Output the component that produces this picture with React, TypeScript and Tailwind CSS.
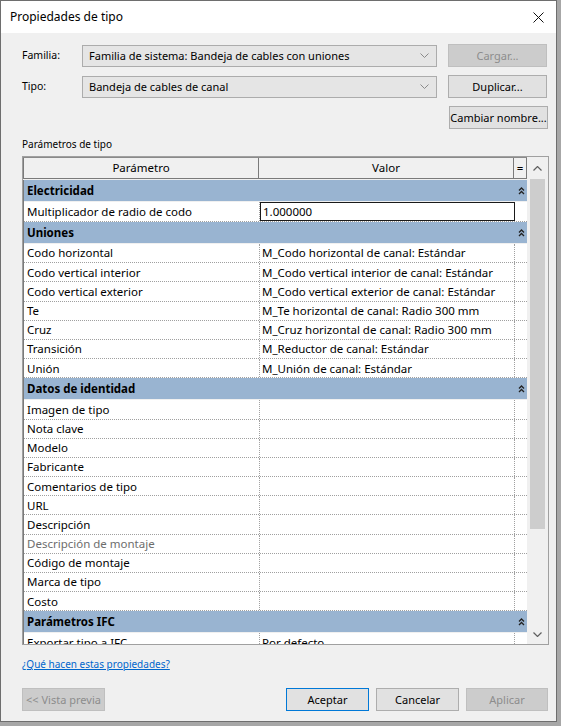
import React from "react";

type Row =
  | { kind: "section"; label: string }
  | { kind: "data"; label: string; value?: string; muted?: boolean; editing?: boolean };

const rows: Row[] = [
  { kind: "section", label: "Electricidad" },
  { kind: "data", label: "Multiplicador de radio de codo", value: "1.000000", editing: true },
  { kind: "section", label: "Uniones" },
  { kind: "data", label: "Codo horizontal", value: "M_Codo horizontal de canal: Estándar" },
  { kind: "data", label: "Codo vertical interior", value: "M_Codo vertical interior de canal: Estándar" },
  { kind: "data", label: "Codo vertical exterior", value: "M_Codo vertical exterior de canal: Estándar" },
  { kind: "data", label: "Te", value: "M_Te horizontal de canal: Radio 300 mm" },
  { kind: "data", label: "Cruz", value: "M_Cruz horizontal de canal: Radio 300 mm" },
  { kind: "data", label: "Transición", value: "M_Reductor de canal: Estándar" },
  { kind: "data", label: "Unión", value: "M_Unión de canal: Estándar" },
  { kind: "section", label: "Datos de identidad" },
  { kind: "data", label: "Imagen de tipo" },
  { kind: "data", label: "Nota clave" },
  { kind: "data", label: "Modelo" },
  { kind: "data", label: "Fabricante" },
  { kind: "data", label: "Comentarios de tipo" },
  { kind: "data", label: "URL" },
  { kind: "data", label: "Descripción" },
  { kind: "data", label: "Descripción de montaje", muted: true },
  { kind: "data", label: "Código de montaje" },
  { kind: "data", label: "Marca de tipo" },
  { kind: "data", label: "Costo" },
  { kind: "section", label: "Parámetros IFC" },
  { kind: "data", label: "Exportar tipo a IFC", value: "Por defecto" },
];

function DropArrow() {
  return (
    <svg width="9" height="5" viewBox="0 0 9 5" className="shrink-0">
      <path d="M0.5 0.5 L4.5 4.5 L8.5 0.5" fill="none" stroke="#8a8a8a" strokeWidth="1" />
    </svg>
  );
}

function Collapse() {
  return (
    <svg width="7" height="8" viewBox="0 0 7 8">
      <path d="M1 3.5 L3.5 1 L6 3.5" fill="none" stroke="#222" strokeWidth="1.3" />
      <path d="M1 7 L3.5 4.5 L6 7" fill="none" stroke="#222" strokeWidth="1.3" />
    </svg>
  );
}

function Combo({ text }: { text: string }) {
  return (
    <div className="w-[355px] h-[22px] border border-[#acacac] bg-[#e5e5e5] flex items-center justify-between pl-[6px] pr-[7px]">
      <span className="leading-none text-[11px] whitespace-nowrap">{text}</span>
      <DropArrow />
    </div>
  );
}

function Btn({
  children,
  disabled,
  primary,
  className,
}: {
  children: React.ReactNode;
  disabled?: boolean;
  primary?: boolean;
  className?: string;
}) {
  const base = "h-[23px] shrink-0 flex items-center justify-center leading-none border text-[11px] whitespace-nowrap ";
  const look = disabled
    ? "bg-[#cccccc] border-[#bfbfbf] text-[#8d8d8d]"
    : primary
    ? "bg-[#e1e1e1] border-[#0078d7] text-black"
    : "bg-[#e1e1e1] border-[#adadad] text-black";
  return <div className={base + look + " " + (className ?? "")}>{children}</div>;
}

function GridRow({ row }: { row: Row }) {
  if (row.kind === "section") {
    return (
      <div className="h-[22px] shrink-0 flex bg-[#99b4d1] border-b border-[#f0f0f0]">
        <div className="flex-1 flex items-center pl-[3px] font-bold">{row.label}</div>
        <div className="w-[12px] flex items-center justify-center">
          <Collapse />
        </div>
      </div>
    );
  }
  return (
    <div
      className={
        "shrink-0 flex bg-white border-b border-dotted border-[#a0a0a0] " + (row.editing ? "h-[20px]" : "h-[19.2px]")
      }
    >
      <div
        className={
          "w-[236px] shrink-0 flex items-center pl-[3px] border-r border-dotted border-[#a0a0a0] whitespace-nowrap overflow-hidden " +
          (row.muted ? "text-[#6d6d6d]" : "")
        }
      >
        {row.label}
      </div>
      {row.editing ? (
        <div className="w-[255px] shrink-0 flex items-center pl-[2px] border border-[#1a1a1a] bg-white">{row.value}</div>
      ) : (
        <div className="w-[255px] shrink-0 flex items-center pl-[2px] border-r border-dotted border-[#a0a0a0] whitespace-nowrap overflow-hidden">
          {row.value ?? ""}
        </div>
      )}
      <div className="flex-1" />
    </div>
  );
}

export default function App() {
  return (
    <div className="w-[561px] h-[726px] bg-[#a7a7a7] text-[11.5px] text-black font-['Noto_Sans',sans-serif] overflow-hidden">
      <div className="w-[557px] h-[722px] border border-[#6e6e6e] bg-[#f0f0f0] flex flex-col">
        {/* title bar */}
        <div className="h-[32px] shrink-0 bg-white flex items-center justify-between pl-[9px] pr-[12px]">
          <span className="text-[12px] leading-none">Propiedades de tipo</span>
          <svg width="11" height="11" viewBox="0 0 11 11">
            <path d="M0.5 0.5 L10.5 10.5 M10.5 0.5 L0.5 10.5" stroke="#111" strokeWidth="1" />
          </svg>
        </div>

        <div className="flex flex-col pl-[21px] pr-[8px] pt-[11px] flex-1">
          {/* family / type selectors */}
          <div className="flex flex-col gap-[8px]">
            <div className="flex items-center">
              <span className="w-[60px] shrink-0 leading-none text-[10.5px]">Familia:</span>
              <Combo text="Familia de sistema: Bandeja de cables con uniones" />
              <Btn disabled className="ml-[11px] w-[99px]">Cargar...</Btn>
            </div>
            <div className="flex items-center">
              <span className="w-[60px] shrink-0 leading-none text-[10.5px]">Tipo:</span>
              <Combo text="Bandeja de cables de canal" />
              <Btn className="ml-[11px] w-[99px]">Duplicar...</Btn>
            </div>
            <div className="flex items-center justify-end">
              <Btn className="w-[99px]">Cambiar nombre...</Btn>
            </div>
          </div>

          <div className="mt-[7px] mb-[4px] leading-[16px] text-[10px]">Parámetros de tipo</div>

          {/* property grid */}
          <div className="w-[527px] h-[489px] border border-[#a0a0a0] bg-[#f0f0f0] flex">
            <div className="w-[504px] flex flex-col overflow-hidden">
              <div className="h-[23px] shrink-0 flex bg-[#f0f0f0] border-t border-[#8a8a8a] border-b border-b-[#f0f0f0]">
                <div className="w-[236px] shrink-0 flex items-center justify-center border-l border-r border-b border-[#7a7a7a]">
                  Parámetro
                </div>
                <div className="w-[255px] shrink-0 flex items-center justify-center border-r border-b border-[#7a7a7a]">
                  Valor
                </div>
                <div className="flex-1 flex items-center justify-center border-r border-b border-[#7a7a7a]">=</div>
              </div>
              <div className="flex flex-col border-l border-[#7a7a7a]">
                {rows.map((r, i) => (
                  <GridRow key={i} row={r} />
                ))}
              </div>
            </div>
            {/* vertical scrollbar */}
            <div className="flex-1 flex flex-col bg-[#f0f0f0]">
              <div className="h-[22px] flex items-center justify-center">
                <svg width="9" height="5" viewBox="0 0 9 5">
                  <path d="M0.5 4.5 L4.5 0.5 L8.5 4.5" fill="none" stroke="#606060" strokeWidth="1.2" />
                </svg>
              </div>
              <div className="mx-[3px] h-[350px] bg-[#cdcdcd]" />
              <div className="flex-1" />
              <div className="h-[20px] flex items-center justify-center">
                <svg width="9" height="5" viewBox="0 0 9 5">
                  <path d="M0.5 0.5 L4.5 4.5 L8.5 0.5" fill="none" stroke="#606060" strokeWidth="1.2" />
                </svg>
              </div>
            </div>
          </div>

          <div className="mt-[12px] leading-[14px] text-[10px] text-[#0066cc] underline">¿Qué hacen estas propiedades?</div>

          {/* dialog buttons */}
          <div className="mt-[17px] flex items-center">
            <Btn disabled className="w-[83px]">&lt;&lt; Vista previa</Btn>
            <div className="flex-1" />
            <div className="flex gap-[7px]">
              <Btn primary className="w-[83px]">Aceptar</Btn>
              <Btn className="w-[83px]">Cancelar</Btn>
              <Btn disabled className="w-[82px]">Aplicar</Btn>
            </div>
          </div>
        </div>
      </div>
    </div>
  );
}
